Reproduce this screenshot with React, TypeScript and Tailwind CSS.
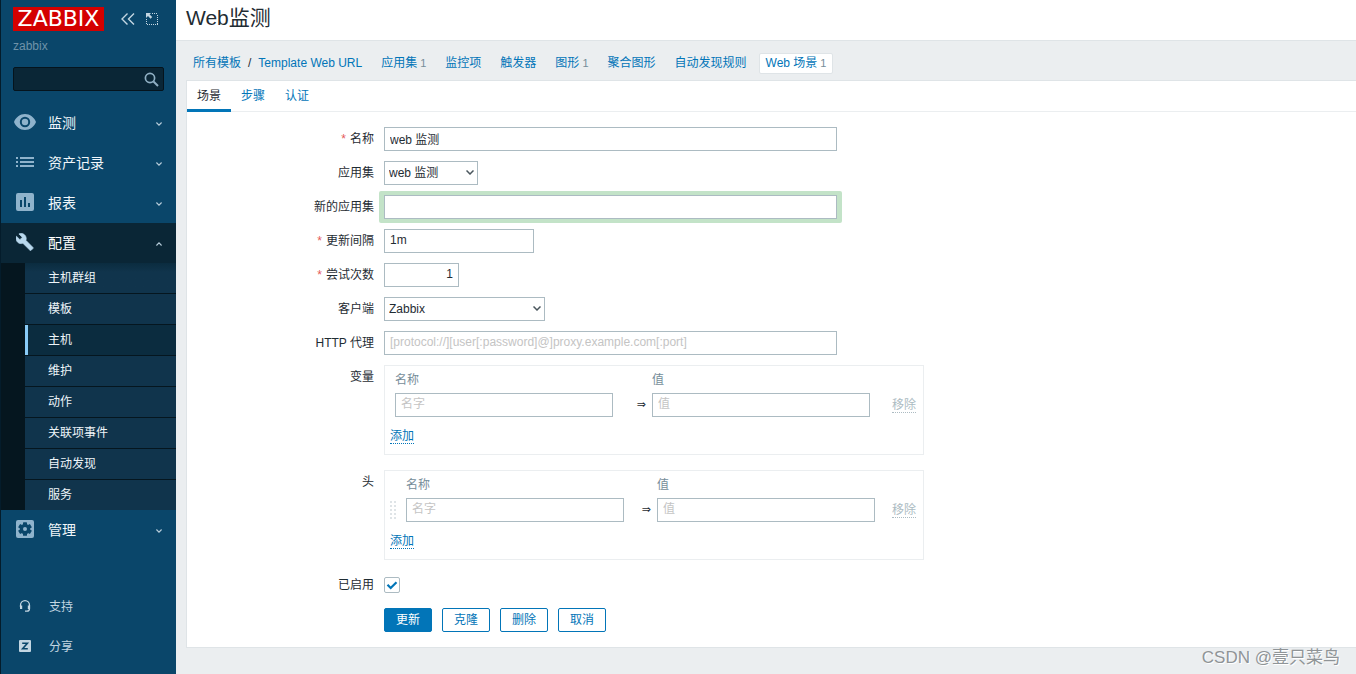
import { useState } from 'react';
import type { ReactNode } from 'react';
import { clsx } from 'clsx';

interface MenuEntry {
  label: string;
  icon: ReactNode;
  children?: string[];
}

const EyeIcon = () => (
  <svg viewBox="0 0 22 16" className="w-[22px] h-4" fill="currentColor">
    <path
      fillRule="evenodd"
      d="M11 0C6 0 1.8 3.3 0 8c1.8 4.700 6 8 11 8s9.200-3.300 11-8C20.200 3.300 16 0 11 0Zm0 13.200A5.200 5.200 0 1 1 11 2.800a5.200 5.200 0 0 1 0 10.400Z"
    />
    <circle cx="11" cy="8" r="3.200" />
  </svg>
);

const ListIcon = () => (
  <svg viewBox="0 0 18 10" className="w-[18px] h-[10px]" fill="currentColor">
    <path d="M0 0h2v2H0zM4 0h14v2H4zM0 4h2v2H0zM4 4h14v2H4zM0 8h2v2H0zM4 8h14v2H4z" />
  </svg>
);

const ReportIcon = () => (
  <svg viewBox="0 0 18 18" className="w-[18px] h-[18px]" fill="currentColor">
    <path
      fillRule="evenodd"
      d="M2 0h14a2 2 0 0 1 2 2v14a2 2 0 0 1-2 2H2a2 2 0 0 1-2-2V2a2 2 0 0 1 2-2Zm2 7v7h2V7H4Zm4-3v10h2V4H8Zm4 6v4h2v-4h-2Z"
    />
  </svg>
);

const WrenchIcon = () => (
  <svg
    viewBox="1 1 23 22"
    className="w-[18px] h-[18px]"
    fill="currentColor"
    stroke="currentColor"
    strokeWidth="0.900"
  >
    <path d="M22.700 19l-9.100-9.100c.9-2.300.4-5-1.500-6.900-2-2-5-2.400-7.400-1.300L9 6 6 9 1.600 4.700C.4 7.100.9 10.100 2.900 12.100c1.900 1.900 4.600 2.400 6.900 1.500l9.100 9.100c.4.4 1 .4 1.400 0l2.300-2.300c.5-.4.5-1.100.1-1.400z" />
  </svg>
);

const GearIcon = () => (
  <svg viewBox="0 0 18 18" className="w-[18px] h-[18px]">
    <rect width="18" height="18" rx="2" fill="currentColor" />
    <g fill="#0a466a">
      <circle cx="9" cy="9" r="5.200" />
      <rect x="7" y="2.200" width="4" height="13.600" rx="0.600" />
      <rect x="7" y="2.200" width="4" height="13.600" rx="0.600" transform="rotate(60 9 9)" />
      <rect x="7" y="2.200" width="4" height="13.600" rx="0.600" transform="rotate(120 9 9)" />
    </g>
    <circle cx="9" cy="9" r="2" fill="currentColor" />
  </svg>
);

const HeadsetIcon = () => (
  <svg viewBox="0 0 12 12" className="w-3 h-3" fill="none" stroke="currentColor">
    <path d="M1.500 7V5.200a4.500 4.500 0 0 1 9 0V8.500c0 1.500-1 2.700-2.500 2.700H6" strokeWidth="1.300" />
    <path d="M2.100 5.500v3.500M9.900 5.500v3.500" strokeWidth="2.200" />
  </svg>
);

const ShareIcon = () => (
  <svg viewBox="0 0 12 12" className="w-3 h-3">
    <rect width="12" height="12" rx="1" fill="currentColor" />
    <path d="M3.200 3.200h5.200L3.600 8.800h5.200" fill="none" stroke="#0a466a" strokeWidth="1.600" />
  </svg>
);

const Chevron = ({ up }: { up?: boolean }) => (
  <svg
    viewBox="0 0 6 4"
    className={clsx('w-[6px] h-1', up && 'rotate-180')}
    fill="none"
    stroke="currentColor"
    strokeWidth="1.200"
  >
    <path d="M0.400 0.500 3 3.100 5.600 0.500" />
  </svg>
);

const menu: MenuEntry[] = [
  { label: '监测', icon: <EyeIcon /> },
  { label: '资产记录', icon: <ListIcon /> },
  { label: '报表', icon: <ReportIcon /> },
  {
    label: '配置',
    icon: <WrenchIcon />,
    children: ['主机群组', '模板', '主机', '维护', '动作', '关联项事件', '自动发现', '服务'],
  },
  { label: '管理', icon: <GearIcon /> },
];

const navLinks = [
  { label: '应用集', count: 1 },
  { label: '监控项' },
  { label: '触发器' },
  { label: '图形', count: 1 },
  { label: '聚合图形' },
  { label: '自动发现规则' },
  { label: 'Web 场景', count: 1, selected: true },
];

const tabs = ['场景', '步骤', '认证'];

const inputClass =
  'block h-6 border border-[#acbbc2] bg-white px-[5px] pb-[2px] leading-5 text-[#1f2c33] outline-none placeholder:text-[#c4c4c4]';

const Sidebar = () => (
  <aside className="flex w-44 shrink-0 flex-col border-l border-[#041c2b] bg-[#0a466a]">
    <div className="flex items-center pt-[7px] pl-3 text-[#c3d6e2]">
      <a
        href="#"
        className="flex h-6 w-[91px] items-center justify-center bg-[#d40000] font-['DejaVu_Sans'] text-[22px] leading-6 text-white"
      >
        ZABBIX
      </a>
      <button type="button" aria-label="收起" className="ml-[17px]">
        <svg viewBox="0 0 14 12" className="w-[14px] h-3" fill="none" stroke="currentColor" strokeWidth="1.400">
          <path d="M6.500 0.500 1 6l5.500 5.500M13 0.500 7.500 6l5.500 5.500" />
        </svg>
      </button>
      <button type="button" aria-label="隐藏" className="ml-[11px]">
        <svg viewBox="0 0 12 12" className="w-3 h-3" fill="none" stroke="currentColor">
          <path d="M6 0.500h6M11.500 2v10M0.500 6v6M1 11.500h11" strokeDasharray="1 1" />
          <path d="M0 0h5L3.600 1.500 6.200 4.100 4.600 5.700 2 3.100 0 5z" fill="currentColor" stroke="none" />
        </svg>
      </button>
    </div>
    <div className="mt-[7px] pl-3 leading-4 text-[#6f93a9]">zabbix</div>
    <div className="mx-3 mt-[13px] flex h-6 items-center rounded-xs border border-[#05141d] bg-[#0a2636]">
      <input type="text" aria-label="搜索" className="h-full min-w-0 flex-1 bg-transparent px-1 text-white outline-none" />
      <button type="button" aria-label="搜索" className="mr-1 text-[#8fafc3]">
        <svg viewBox="0 0 15 15" className="w-[15px] h-[15px]" fill="none" stroke="currentColor">
          <circle cx="6" cy="6" r="4.600" strokeWidth="1.700" />
          <path d="M9.500 9.500 14 14" strokeWidth="2" />
        </svg>
      </button>
    </div>
    <nav className="mt-3">
      {menu.map((item) => (
        <div key={item.label}>
          <a
            href="#"
            className={clsx(
              'flex h-10 items-center pr-[14px] text-sm',
              item.children ? 'bg-[#0a2636] text-white' : 'text-[#f0f6fa]'
            )}
          >
            <span
              className={clsx(
                'flex w-12 justify-center pb-[2px]',
                item.children ? 'text-[#b8d8ee]' : 'text-[#8fb3cc]'
              )}
            >
              {item.icon}
            </span>
            <span className="-ml-px flex-1">{item.label}</span>
            <span className="pt-[2px] text-[#b5cbd9]">
              <Chevron up={!!item.children} />
            </span>
          </a>
          {item.children && (
            <ul className="bg-[#05161f] pl-6">
              {item.children.map((child) => (
                <li
                  key={child}
                  className="border-b border-[#05161f] bg-[#10344c] bg-linear-to-b first:from-[#0b2c3f] first:to-[#10344c] first:to-30% last:border-b-0"
                >
                  <a
                    href="#"
                    className={clsx(
                      'flex h-[30px] items-center text-[#eef5f9]',
                      child === '主机' ? 'border-l-[3px] border-[#89cbf7] bg-[#0b2c3f] pl-5' : 'pl-[23px]'
                    )}
                  >
                    {child}
                  </a>
                </li>
              ))}
            </ul>
          )}
        </div>
      ))}
    </nav>
    <div className="mt-auto pb-2 text-[#c3d6e2]">
      <a href="#" className="flex h-10 items-center">
        <span className="flex w-12 justify-center">
          <HeadsetIcon />
        </span>
        <span className="pt-[2px]">支持</span>
      </a>
      <a href="#" className="flex h-10 items-center">
        <span className="flex w-12 justify-center">
          <ShareIcon />
        </span>
        <span className="pt-[2px]">分享</span>
      </a>
    </div>
  </aside>
);

interface FieldProps {
  label: string;
  id?: string;
  required?: boolean;
  children: ReactNode;
}

const Field = ({ label, id, required, children }: FieldProps) => (
  <div className="flex items-start gap-[10px]">
    <label htmlFor={id} className="w-[187px] shrink-0 text-right leading-6">
      {required && <span className="mr-1 text-[#e45959]">*</span>}
      {label}
    </label>
    {children}
  </div>
);

interface DropdownProps {
  id: string;
  options: string[];
  className: string;
}

const Dropdown = ({ id, options, className }: DropdownProps) => (
  <div className={clsx('relative', className)}>
    <select
      id={id}
      className="block h-6 w-full appearance-none border border-[#acbbc2] bg-white pr-5 pl-1 text-[#1f2c33] outline-none"
    >
      {options.map((option) => (
        <option key={option}>{option}</option>
      ))}
    </select>
    <svg
      viewBox="0 0 8 5"
      className="pointer-events-none absolute top-[9px] right-1 h-[5px] w-2"
      fill="none"
      stroke="#4a565d"
      strokeWidth="1.500"
    >
      <path d="M0.500 0.500 4 4 7.500 0.500" />
    </svg>
  </div>
);

const PairTable = ({ title, sortable }: { title: string; sortable?: boolean }) => (
  <div className="w-[540px] border border-[#ebeef0] pb-[10px]">
    <table className="w-full table-fixed border-collapse">
      <colgroup>
        <col className={sortable ? 'w-[21px]' : 'w-[10px]'} />
        <col className="w-[218px]" />
        <col className={sortable ? 'w-[33px]' : 'w-[39px]'} />
        <col className="w-[218px]" />
        <col />
      </colgroup>
      <thead>
        <tr className="h-[27px] text-left text-[#768d99]">
          <td />
          <th className="font-normal">名称</th>
          <td />
          <th className="font-normal">值</th>
          <td />
        </tr>
      </thead>
      <tbody>
        <tr>
          <td>
            {sortable && (
              <svg viewBox="0 0 6 18" className="ml-[5px] h-[18px] w-[6px]" fill="#dfe4e7">
                {[0, 4, 8, 12, 16].map((y) => (
                  <g key={y}>
                    <rect x="0" y={y} width="2" height="2" />
                    <rect x="4" y={y} width="2" height="2" />
                  </g>
                ))}
              </svg>
            )}
          </td>
          <td>
            <input type="text" aria-label={`${title} 名称`} placeholder="名字" className={clsx(inputClass, 'w-full')} />
          </td>
          <td className="pr-[6px] text-right font-['DejaVu_Sans'] text-[11px]">⇒</td>
          <td>
            <input type="text" aria-label={`${title} 值`} placeholder="值" className={clsx(inputClass, 'w-full')} />
          </td>
          <td className="pr-[7px] text-right">
            <button
              type="button"
              disabled
              className="border-b border-dotted border-[#acbbc2] align-middle leading-[14px] text-[#acbbc2]"
            >
              移除
            </button>
          </td>
        </tr>
      </tbody>
    </table>
    <div className="flex pt-3 pl-[5px]">
      <button type="button" className="border-b border-dotted border-[#0275b8] leading-[14px] text-[#0275b8]">
        添加
      </button>
    </div>
  </div>
);

const ScenarioForm = () => {
  const [enabled, setEnabled] = useState(true);

  return (
    <form className="pt-[15px] pb-[15px]" onSubmit={(e) => e.preventDefault()}>
      <div className="flex flex-col gap-[10px]">
        <Field label="名称" id="name" required>
          <input id="name" type="text" defaultValue="web 监测" className={clsx(inputClass, 'w-[453px]')} />
        </Field>
        <Field label="应用集" id="application">
          <Dropdown id="application" options={['web 监测']} className="w-[94px]" />
        </Field>
        <Field label="新的应用集" id="new-application">
          <div className="-mx-[5px] -my-1 rounded-xs bg-[#c3e3c8] px-[5px] py-1">
            <input id="new-application" type="text" className={clsx(inputClass, 'w-[453px]')} />
          </div>
        </Field>
        <Field label="更新间隔" id="delay" required>
          <input id="delay" type="text" defaultValue="1m" className={clsx(inputClass, 'w-[150px]')} />
        </Field>
        <Field label="尝试次数" id="retries" required>
          <input id="retries" type="text" defaultValue="1" className={clsx(inputClass, 'w-[75px] text-right')} />
        </Field>
        <Field label="客户端" id="agent">
          <Dropdown id="agent" options={['Zabbix']} className="w-[161px]" />
        </Field>
        <Field label="HTTP 代理" id="http-proxy">
          <input
            id="http-proxy"
            type="text"
            placeholder="[protocol://][user[:password]@]proxy.example.com[:port]"
            className={clsx(inputClass, 'w-[453px]')}
          />
        </Field>
        <Field label="变量">
          <PairTable title="变量" />
        </Field>
      </div>
      <div className="mt-[15px] flex flex-col gap-[13px]">
        <Field label="头">
          <PairTable title="头" sortable />
        </Field>
        <Field label="已启用" id="status">
          <div className="relative mt-1 h-4 w-4">
            <input
              id="status"
              type="checkbox"
              checked={enabled}
              onChange={(e) => setEnabled(e.target.checked)}
              className="block h-4 w-4 appearance-none rounded-xs border border-[#acbbc2] bg-white"
            />
            {enabled && (
              <svg
                viewBox="0 0 16 16"
                className="pointer-events-none absolute inset-0 h-4 w-4"
                fill="none"
                stroke="#0275b8"
                strokeWidth="2.200"
              >
                <path d="M3.500 7.800 6.700 11 12.500 5.300" />
              </svg>
            )}
          </div>
        </Field>
      </div>
      <div className="mt-[11px] ml-[197px] flex gap-[10px]">
        <button type="submit" className="h-6 w-12 rounded-xs border border-[#0275b8] bg-[#0275b8] text-white">
          更新
        </button>
        {['克隆', '删除', '取消'].map((label) => (
          <button
            key={label}
            type="button"
            className="h-6 w-12 rounded-xs border border-[#0275b8] bg-white text-[#0275b8]"
          >
            {label}
          </button>
        ))}
      </div>
    </form>
  );
};

const App = () => {
  const [activeTab, setActiveTab] = useState(tabs[0]);

  return (
    <div className="relative flex min-h-screen bg-[#ebeef0] font-['Liberation_Sans','Noto_Sans_CJK_SC',sans-serif] text-xs text-[#1f2c33]">
      <Sidebar />

      <main className="min-w-0 flex-1">
        <header className="h-[41px] border-b border-[#dfe4e7] bg-white pl-[10px]">
          <h1 className="text-[21px] leading-9">Web监测</h1>
        </header>

        {/* Breadcrumbs and object links */}
        <nav className="flex h-[39px] items-center gap-[5px] pt-[5px] pl-[10px] whitespace-nowrap text-[#0275b8]">
          <div className="flex px-[7px]">
            <a href="#">所有模板</a>
            <span className="mx-[7px] text-[#1f2c33]">/</span>
            <a href="#">Template Web URL</a>
          </div>
          {navLinks.map((link) => (
            <a
              key={link.label}
              href="#"
              className={clsx(
                'flex h-[21px] items-center rounded-xs border px-[6px]',
                link.selected ? 'border-[#dfe4e7] bg-white' : 'border-transparent'
              )}
            >
              {link.label}
              {link.count && <span className="ml-[3px] text-[11px] text-[#768d99]">{link.count}</span>}
            </a>
          ))}
        </nav>

        <section className="ml-[10px] border-y border-l border-[#dfe4e7] bg-white">
          <div className="flex h-[31px] border-b border-[#ebeef0]" role="tablist">
            {tabs.map((tab) => (
              <button
                key={tab}
                type="button"
                role="tab"
                aria-selected={tab === activeTab}
                onClick={() => setActiveTab(tab)}
                className={clsx(
                  '-mb-px border-b-3 px-[10px] pt-[2px]',
                  tab === activeTab ? 'border-[#0275b8] text-[#1f2c33]' : 'border-transparent text-[#0275b8]'
                )}
              >
                {tab}
              </button>
            ))}
          </div>
          <ScenarioForm />
        </section>
      </main>

      <div className="pointer-events-none absolute right-4 bottom-1 text-[17px] text-[#8f9497] [text-shadow:1px_1px_0_white]">
        CSDN @壹只菜鸟
      </div>
    </div>
  );
};

export default App;
